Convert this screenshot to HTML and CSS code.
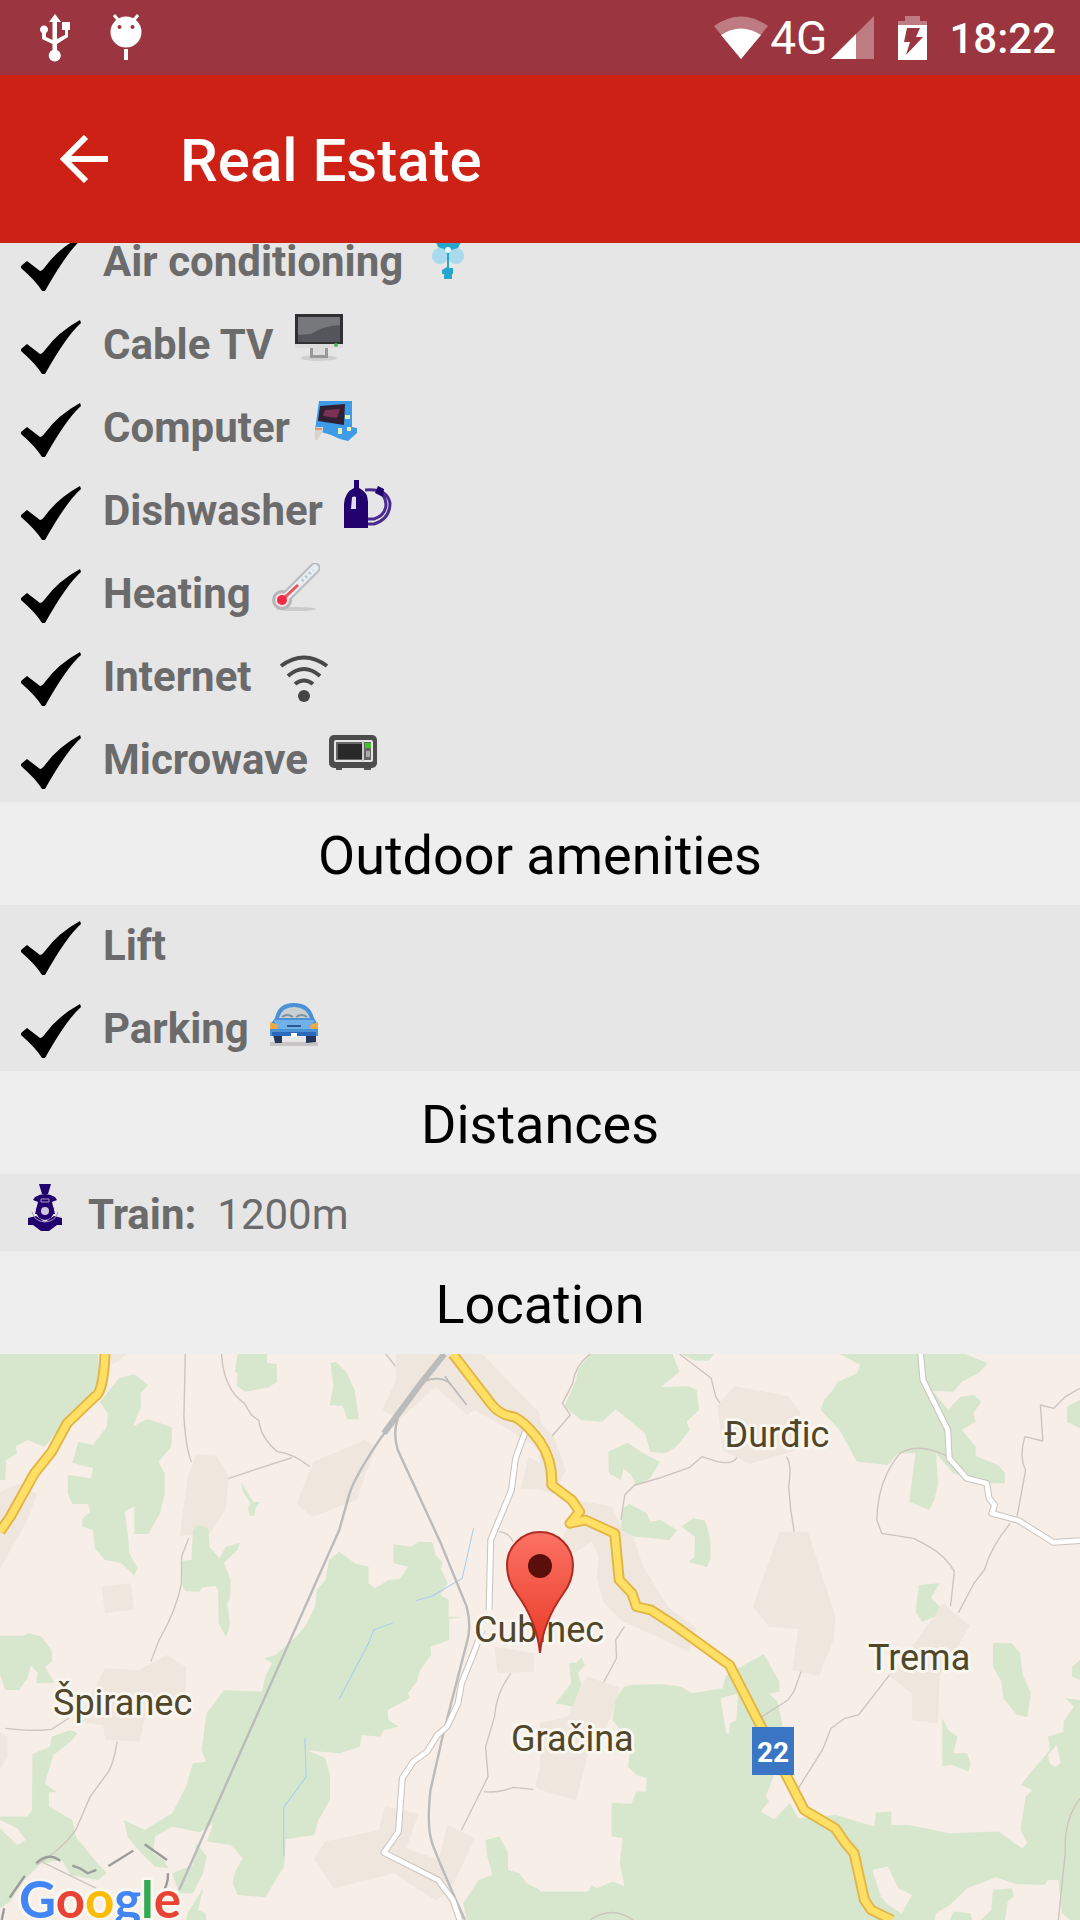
FILE: index.html
```html
<!DOCTYPE html>
<html lang="en">
<head>
  <meta charset="UTF-8">
  <meta name="viewport" content="width=device-width, initial-scale=1.0">
  <title>Real Estate</title>
  <link rel="stylesheet" href="styles.css">
</head>
<body>
  <svg class="sprite" aria-hidden="true">
    <symbol id="check" viewBox="0 0 60 54">
      <path d="M0 29L6 24L19 34Q21 34 24 30Q37 12 59 0L60 3Q46 15 24 54H21Q15 44 0 31Z"/>
    </symbol>
  </svg>

  <header>
    <div class="status-bar">
      <svg width="31" height="48" viewBox="0 0 31 48" fill="#fff">
        <path d="M12.500 36V8H9L15 0L21 8H17V25L25 21V16H22V8H30V16H28V23L17 30V36A6 6 0 1 1 12.500 36V30L2 25V19A4 4 0 1 1 6 19V23L12.500 26Z"/>
      </svg>
      <svg class="bug" width="32" height="48" viewBox="0 0 32 48">
        <path d="M4 1L9 7M28 1L23 7" stroke="#fff" stroke-width="3"/>
        <circle cx="16" cy="18" r="15.500" fill="#fff"/>
        <circle cx="9.500" cy="13" r="2" fill="#9b3640"/>
        <circle cx="22.500" cy="13" r="2" fill="#9b3640"/>
        <path d="M14 35H18V46H14Z" fill="#fff"/>
      </svg>
      <span class="spacer"></span>
      <svg width="54" height="44" viewBox="0 0 54 44">
        <path d="M0 10Q27 -9 54 10L27 43Z" fill="#fff" opacity=".35"/>
        <path d="M7 19Q27 6 47 19L27 43Z" fill="#fff"/>
      </svg>
      <span class="network">4G</span>
      <svg width="43" height="43" viewBox="0 0 43 43">
        <path d="M0 43L43 0V43Z" fill="#fff" opacity=".35"/>
        <path d="M0 43L25 18V43Z" fill="#fff"/>
      </svg>
      <svg class="battery" width="29" height="44" viewBox="0 0 29 44">
        <path d="M0 8V5H7V0H22V5H29V9H0Z" fill="#fff" opacity=".35"/>
        <path d="M0 9H29V44H0Z" fill="#fff"/>
        <path d="M9 12H22L18 21H25L8 39L12 26H6Z" fill="#9b3640"/>
      </svg>
      <span class="clock">18:22</span>
    </div>
    <div class="toolbar">
      <button class="back" aria-label="Back">
        <svg width="48" height="48" viewBox="0 0 48 48" fill="none" stroke="#fff" stroke-width="6">
          <path d="M48 24H5M26 2L4 24L26 46"/>
        </svg>
      </button>
      <h1>Real Estate</h1>
    </div>
  </header>

  <main>
    <ul class="amenities indoor">
      <li>
        <svg class="check"><use href="#check"/></svg>
        <span class="name">Air conditioning</span>
        <svg class="icon" viewBox="0 0 48 48">
          <g fill="#a9daed">
            <circle cx="16" cy="25" r="8"/><circle cx="32" cy="25" r="8"/>
            <path d="M9 8H40L28 25H21Z"/>
          </g>
          <path d="M11 8H38L34 17L27 19L25 23V37H29V43H28V48H20V43H18V39L23 36V23L20 18L14 16Z" fill="#27a5cb"/>
          <circle cx="24" cy="19" r="3" fill="#e5fbff"/>
        </svg>
      </li>
      <li>
        <svg class="check"><use href="#check"/></svg>
        <span class="name">Cable TV</span>
        <svg class="icon" viewBox="0 0 48 48">
          <ellipse cx="24" cy="44" rx="18" ry="3" fill="#cfcfcf"/>
          <path d="M15 34H33V44H15Z" fill="#999"/>
          <path d="M18 34H30V41H18Z" fill="#ddd"/>
          <path d="M0 28H48V34H0Z" fill="#ddd"/>
          <path d="M0 0H48V30H0Z" fill="#303033"/>
          <path d="M3 3H45V28H3Z" fill="#55565c"/>
          <path d="M3 3H45V11Q27 12 16 20L3 21Z" fill="#77787c"/>
          <circle cx="41" cy="31" r="2" fill="#4bb35b"/>
        </svg>
      </li>
      <li>
        <svg class="check"><use href="#check"/></svg>
        <span class="name">Computer</span>
        <svg class="icon" viewBox="0 0 48 48">
          <path d="M8 4H41V30L46 31V36L37 44L29 42L20 38L4 33Z" fill="#3d9be8"/>
          <path d="M9 9L34 7L33 28L7 24Z" fill="#302033"/>
          <path d="M14 13L29 12L26 21L12 19Z" fill="#7c3156"/>
          <path d="M34 18H39V22H34ZM27 31H31V37H27ZM36 30H40V34H36Z" fill="#e9efad"/>
          <path d="M5 30H12V34L6 43H4V34Z" fill="#d8d2cc"/>
          <path d="M4 31H11V33H4Z" fill="#d99b78"/>
        </svg>
      </li>
      <li>
        <svg class="check"><use href="#check"/></svg>
        <span class="name">Dishwasher</span>
        <svg class="icon" viewBox="0 0 48 48">
          <path d="M10 0H15V8Q24 12 24 22V48H0V24Q1 12 10 8Z" fill="#22006e"/>
          <path d="M8 17Q11 16 12 17V29H7Z" fill="#e1dded"/>
          <path d="M21 10Q43 8 46 23Q46 39 30 44H24M24 39H30Q42 35 42 24Q41 14 34 12" fill="none" stroke="#4a2c91" stroke-width="3"/>
          <path d="M34 6L40 9L39 17L31 13Z" fill="#22006e"/>
        </svg>
      </li>
      <li>
        <svg class="check"><use href="#check"/></svg>
        <span class="name">Heating</span>
        <svg class="icon" viewBox="0 0 48 48">
          <ellipse cx="24" cy="46" rx="20" ry="2" fill="#cbcbcb"/>
          <path d="M10 38L43 5" stroke="#b5bcc2" stroke-width="11" stroke-linecap="round"/>
          <circle cx="10" cy="37" r="10" fill="#b5b5b9"/>
          <path d="M12 36L43 5" stroke="#e9edf0" stroke-width="7" stroke-linecap="round"/>
          <circle cx="10" cy="37" r="7" fill="#efdfe3"/>
          <path d="M10 37L26 22" stroke="#e65461" stroke-width="3"/>
          <path d="M30 18L41 7" stroke="#aac6d5" stroke-width="3" stroke-dasharray="2 3"/>
          <circle cx="10" cy="37" r="5" fill="#f22b45"/>
        </svg>
      </li>
      <li>
        <svg class="check"><use href="#check"/></svg>
        <span class="name">Internet</span>
        <svg class="icon large" viewBox="0 0 64 64">
          <g fill="none" stroke="#494949" stroke-width="4">
            <path d="M9 20Q32 3 55 20"/>
            <path d="M16 30Q32 16 48 30"/>
            <path d="M23 38Q32 31 41 38"/>
          </g>
          <circle cx="32" cy="50" r="6" fill="#444"/>
        </svg>
      </li>
      <li>
        <svg class="check"><use href="#check"/></svg>
        <span class="name">Microwave</span>
        <svg class="icon" viewBox="0 0 48 48">
          <path d="M7 36H13V41H7ZM35 36H42V41H35Z" fill="#555"/>
          <rect y="6" width="48" height="33" rx="5" fill="#4c4c4c"/>
          <rect x="6" y="12" width="37" height="20" rx="1" fill="#666" stroke="#e5e5e5" stroke-width="2"/>
          <path d="M9 15H33V30H9Z" fill="#292929"/>
          <path d="M34 12V32" stroke="#ccc" stroke-width="2"/>
          <path d="M36 14H42V19H36Z" fill="#42c12b"/>
          <path d="M37 22H41V28H37Z" fill="#aaa"/>
        </svg>
      </li>
    </ul>

    <h2>Outdoor amenities</h2>
    <ul class="amenities">
      <li>
        <svg class="check"><use href="#check"/></svg>
        <span class="name">Lift</span>
      </li>
      <li>
        <svg class="check"><use href="#check"/></svg>
        <span class="name">Parking</span>
        <svg class="icon" viewBox="0 0 48 48">
          <path d="M0 44H48V48H0Z" fill="#c7c5c5"/>
          <path d="M3 36H12V45H5ZM36 36H46V44L36 45Z" fill="#24365a"/>
          <path d="M5 20Q8 5 24 5Q40 5 44 20L48 27V38H0V27Z" fill="#4b91d3"/>
          <path d="M9 20Q12 9 24 9Q36 9 40 20Z" fill="#c8d0d2"/>
          <path d="M12 19Q17 15 23 19M26 19Q32 15 37 19" fill="none" stroke="#7f929d" stroke-width="2"/>
          <path d="M4 22H44L42 31H6Z" fill="#70b1e9"/>
          <path d="M17 27H31V29H17Z" fill="#2d5796"/>
          <path d="M0 24L8 27L7 31H0ZM48 24L40 27L41 31H48Z" fill="#f2a944"/>
          <path d="M2 34H46V38H2Z" fill="#2a69bb"/>
          <path d="M21 35H27V39H21Z" fill="#fff"/>
        </svg>
      </li>
    </ul>

    <h2>Distances</h2>
    <div class="distance">
      <svg class="icon" viewBox="0 0 48 48" fill="#22006e">
        <path d="M18 0H30L27 10H21Z"/>
        <path d="M14 13Q24 7 34 13L36 16L31 18L34 30H14L17 18L12 16Z"/>
        <path d="M7 34L15 32L24 38L33 32L41 34V41H36L28 47H20L12 41H7Z"/>
        <circle cx="24" cy="27" r="9"/>
        <circle cx="24" cy="27" r="4" fill="#cfc8df"/>
        <path d="M20 15H28V18H20ZM11 28Q13 37 24 38Q35 37 37 28" fill="none" stroke="#a99bc5" stroke-width="1"/>
      </svg>
      <span class="name">Train:</span>
      <span class="value">1200m</span>
    </div>

    <h2>Location</h2>
    <svg class="map" viewBox="0 0 1080 566" role="img" aria-label="Map of Cubinec">
      <defs>
        <linearGradient id="pin" x1="0" y1="0" x2="0" y2="1">
          <stop offset="0" stop-color="#fb7264"/>
          <stop offset="1" stop-color="#e93a25"/>
        </linearGradient>
      </defs>

      <g transform="scale(.3444 .3333) translate(0 -12)">
        <!-- built-up areas -->
        <g class="town">
          <path d="M320 12H370L325 45ZM0 425L55 400L107 432L80 510L0 655ZM570 312L628 318L664 380L655 480L610 550L522 558L545 380ZM295 710L380 700L390 778L305 790ZM910 335L1060 270L1090 290L1035 450L905 502L862 460ZM1150 12H1400L1568 190V300L1480 240L1380 180L1355 195L1265 110L1160 210L1110 180L1150 90ZM1535 320L1568 340V420L1512 415Z"/>
          <path transform="translate(1568 0)" d="M0 215L40 260L75 360L40 430L0 420ZM110 450L210 470L235 530L265 545L300 650L375 775L455 835L430 905L330 855L240 815L185 760L165 680L170 620L150 575L100 610L60 580ZM565 108L720 138L755 185L745 300L610 342L530 300L515 165ZM695 545H778L858 800L852 870L810 978L732 960L750 838L665 830L618 770ZM1170 760L1248 828L1160 980L1155 1120L1080 1110V1030L1010 975L1095 870Z"/>
          <path transform="translate(0 840)" d="M305 115L405 120L485 75L540 110V190L420 270L405 335L305 330L300 285L220 275ZM0 305L22 320V380L0 420ZM1435 50L1550 70V125L1445 130ZM1118 528L1215 552L1180 655L1275 690L1298 585L1378 625L1310 780L1265 812L1145 730L968 775L912 685L945 635L1100 600ZM1568 410L1555 470L1568 480Z"/>
          <path transform="translate(1568 840)" d="M135 140L230 172L205 265L140 370L105 510L0 480V280L80 260Z"/>
        </g>

        <!-- woods -->
        <g class="wood">
          <path d="M0 12H285L288 90L250 160L185 220L130 290L80 270L45 290L50 310L18 330L15 390H0ZM330 105L345 85L390 73L430 105L408 130L410 170L385 230L428 207L500 232L497 290L460 335L478 370V430L465 490L430 552H390V468L362 485L372 560L375 610L400 655L390 675L350 638L305 630L275 595L270 540L238 530L240 505L262 485L255 462H210L197 430V375L265 385L270 355L210 338L228 275L270 285L310 230L313 190L290 155ZM690 12H775V38L804 42V95L780 112L712 125L688 108L690 70L682 65ZM960 40L975 35L1005 65L1030 120L1042 208H1008L995 168L957 165L968 110ZM700 395L735 455L755 457L742 475L738 497H725L720 475L727 460L705 425ZM560 540L575 524L605 535L608 590L638 625L655 590L697 578L690 600L650 638L670 690L668 745L660 760L668 825L656 862L635 820L633 720L625 708L590 712L578 725L540 724L530 710L528 632L556 630ZM0 857H65L85 850L120 860L150 900L152 935L130 950L158 998L105 1000L110 970L90 945L80 985L55 1020H15L0 975ZM1142 583L1195 590L1215 575L1255 577L1265 615L1285 638L1280 655L1300 700L1278 735L1303 750L1302 800L1340 802L1304 807V870L1250 890L1252 915L1220 960L1210 995L1185 1030L1190 1045L1125 1080L1128 1110L1158 1130L1115 1140L1105 1160L1050 1155L1045 1190L985 1210L935 1205L890 1200L945 1225L958 1275V1350L925 1410L912 1455L830 1468L825 1550L770 1642L690 1635L675 1600L685 1560L705 1525L670 1485L600 1475L620 1420L580 1448L500 1430L450 1460L445 1510L475 1530L490 1555L450 1550L410 1510L370 1460L360 1410L420 1440L500 1390L540 1310L560 1240L598 1235L585 1200L600 1090L650 1020L760 1025L770 980L790 940L765 925L800 915L860 860L885 830L915 770L920 720L945 690L955 630L985 605L1030 640L1070 650L1070 700L1088 715L1130 690L1160 688L1185 650L1142 640Z"/>
          <path transform="translate(1568 0)" d="M145 12H385L405 65L350 112L430 108L455 120L462 180L425 215L435 240L395 290L365 310L320 305L305 250L220 178L180 215L120 210L70 170L105 90L110 60ZM410 12H505L490 32H450ZM870 12H1235L1300 40L1275 68L1225 95L1200 125L1140 122L1185 180L1220 140L1260 135L1282 155L1258 190L1265 215L1225 240L1265 290V318L1330 345L1350 370V400H1290L1200 370L1150 310L1156 400L1145 450L1130 480L1072 455L1090 310L1040 310L1010 345L920 335L870 240L815 180L825 150L850 120L865 95L920 70L930 45ZM198 305L255 278L300 310L348 335L320 385L280 405L265 375L242 355L235 390L200 370ZM240 475L260 462L310 490L320 515L350 510L398 540L375 570L330 565L275 560L235 540ZM410 530L445 505L480 512L495 570V625L485 652L432 635L448 620L450 560ZM1100 705L1160 700L1135 745L1162 770L1145 800L1110 815L1090 785ZM1530 170L1568 150V235L1530 215Z"/>
          <path transform="translate(0 840)" d="M150 320L205 300L225 310L205 335L155 375L130 460L165 487H142V530L210 570L220 620L275 690L310 730L285 750L205 735L180 690L120 700L70 750L30 815L0 835V560L80 560L93 540L94 372L145 350ZM500 730L560 705L570 640L600 680L590 730L560 790L520 790ZM545 850L590 775L575 840L598 850V870H540ZM1410 630L1450 620L1465 650L1475 670V720L1508 730L1530 760L1568 780V870H1355L1345 820L1390 750L1430 735L1415 680Z"/>
          <path transform="translate(1568 840)" d="M245 170L265 165L350 162L410 170L440 190L530 175L540 135L650 72L695 155V185L665 190L690 215L705 290L680 435L655 500L665 515L640 545L680 568L725 520L750 565L860 555L970 590L975 548L1020 545V585L1070 585L1190 610L1330 605L1400 655L1415 640L1395 600L1410 500L1430 480L1395 465L1480 360L1475 320L1520 305V275L1550 230L1525 205L1568 210V870H1540L1515 850L1505 750L1475 750L1465 765L1380 762L1325 742L1240 775L1190 825L1150 850L1145 870H0V785L140 785L150 765L165 775L210 755L245 768L232 700L240 625L208 620V518L265 522L280 485H308L310 445L280 435L255 410L265 340L210 270L220 205ZM85 100L105 98L120 82L130 105L110 130L120 165L95 230L45 220L90 160ZM1315 38L1370 40L1395 70L1400 130L1425 190L1415 262L1385 255L1345 205L1340 155L1315 110ZM1168 265L1185 300L1212 320L1200 370L1240 370L1250 400L1245 425L1195 405L1168 408ZM1568 90L1545 110V140L1568 150ZM1190 870L1200 845L1250 850L1255 870ZM1315 780L1370 775L1375 800L1358 815L1350 870H1280L1310 840Z"/>
          <path class="clearing" d="M0 1410L50 1435L75 1470L50 1485L0 1435Z"/>
          <path class="clearing" transform="translate(1568 840)" d="M525 205L575 190L570 270L552 280L548 312L540 308ZM965 720L1010 710L1040 775L1080 795L1050 850L1010 825L990 800ZM1475 375L1500 345L1512 400L1495 412L1480 400Z"/>
        </g>

        <!-- water and paths -->
        <path class="water" d="M1375 535L1342 685L1255 738L1208 752M1142 818L1085 840L1070 880L985 1048M885 1165L889 1280L824 1372V1520"/>
        <g class="path">
          <path d="M538 12L534 200Q540 300 556 335M643 12Q650 120 710 160L730 195L752 212Q755 260 805 305Q850 310 900 350M664 385L848 323M548 565L527 620V700Q512 780 462 870L438 935M1120 12L1148 48M1450 545Q1480 550 1490 575M15 1135Q100 1145 150 1138L200 1105M340 1175Q330 1240 315 1265L262 1340L220 1440Q180 1500 105 1545M120 1535L280 1615M1483 970Q1440 1030 1436 1100L1410 1190L1417 1280L1340 1440M1405 1325Q1450 1330 1490 1312L1548 1318"/>
          <path transform="translate(1568 0)" d="M145 12Q100 50 95 100L65 160L88 195L35 258M405 12L497 85L510 140L522 158M572 322Q560 345 515 335L470 320L435 352L348 384L275 405L246 435L235 510M715 320Q732 340 722 410L728 480L738 545M1185 320Q1100 275 1045 310Q980 390 978 510L992 550L1085 565L1130 590Q1180 620 1203 665L1192 768M1568 115L1525 140L1492 175L1453 165L1460 273L1408 260Q1390 320 1410 360L1385 500M1365 520Q1310 590 1290 660L1260 700L1215 788M245 830L220 870L222 925L185 997M758 965L737 1025L720 1050L640 1103M1015 975L925 1095L885 1105L845 1135L820 1200L750 1315M1568 1345Q1520 1410 1525 1510L1505 1710M145 1710Q210 1665 270 1710"/>
        </g>

        <!-- railways -->
        <path class="rail" d="M1290 12L1105 265Q1030 380 1015 430L985 540L855 842L520 1620M1155 205Q1140 250 1155 300L1280 580L1355 770Q1370 830 1355 880L1285 1160L1250 1320Q1238 1430 1255 1480Q1280 1550 1350 1710"/>
        <path class="rail siding" d="M1230 95Q1270 75 1305 98L1355 165M1292 78L1308 105"/>
        <path class="rail station" d="M1290 12L1222 100L1115 250"/>
        <path class="border" d="M5 1710L12 1675M28 1643L72 1578M105 1540Q140 1505 175 1533M210 1547L232 1555L255 1570L280 1560M315 1548L387 1502M420 1483L485 1530M487 1570Q490 1590 478 1618"/>

        <!-- roads -->
        <g class="road-edge">
          <path id="local" d="M1525 245L1497 325L1485 420L1425 570L1420 780M1400 840L1375 910L1340 1000L1330 1060L1298 1130L1270 1155L1240 1205L1200 1235L1168 1285L1157 1445L1115 1508L1272 1590L1315 1650L1335 1710M2673 10L2680 90L2752 240L2756 325L2807 385L2865 400L2872 445L2888 465L2880 490L2958 512L3058 577L3136 572"/>
        </g>
        <use href="#local" class="road"/>
        <g class="main-edge">
          <path id="main" d="M305 12Q300 130 275 140L195 220L150 305L100 370L30 500L0 545M1315 12L1425 160Q1450 195 1490 200Q1520 210 1568 275Q1605 330 1602 405L1660 450L1683 485L1655 520L1700 510L1785 550L1798 690L1835 730L1848 770L1890 780L1950 820L2118 945L2200 1110L2335 1380L2425 1435L2455 1480L2480 1510L2510 1650L2530 1680L2590 1710"/>
        </g>
        <use href="#main" class="main-road"/>
      </g>

      <rect x="752" y="373" width="42" height="48" fill="#3b76c4"/>
      <text class="road-number" x="773" y="408">22</text>
      <g class="place">
        <text x="724" y="93">Đurđic</text>
        <text x="474" y="288">Cubinec</text>
        <text x="868" y="316">Trema</text>
        <text x="53" y="361">Špiranec</text>
        <text x="511" y="397">Gračina</text>
      </g>
      <path d="M540 299Q537 268 517 240Q507 227 507 211A33 33 0 0 1 573 211Q573 227 563 240Q543 268 540 299Z" fill="url(#pin)" stroke="#ae2c23" stroke-width="2"/>
      <circle cx="540" cy="212" r="12" fill="#5a0f0c"/>
      <text class="google" x="19" y="564"><tspan fill="#4285f4">G</tspan><tspan fill="#ea4335">o</tspan><tspan fill="#fbbc05">o</tspan><tspan fill="#4285f4">g</tspan><tspan fill="#34a853">l</tspan><tspan fill="#ea4335">e</tspan></text>
    </svg>
  </main>
</body>
</html>
```
FILE: styles.css
```css
* {
  box-sizing: border-box;
}

body {
  margin: 0;
  background-color: #eee;
  color: #6b6b6b;
  font-family: Roboto, sans-serif;
  font-size: 42px;
  line-height: 50px;
}

.sprite {
  position: absolute;
  width: 0;
  height: 0;
}

svg {
  flex: none;
}

/* status bar and toolbar */
header {
  position: sticky;
  top: 0;
  z-index: 1;
  color: #fff;
}

.status-bar {
  display: flex;
  align-items: center;
  height: 75px;
  padding: 0 24px 0 40px;
  background-color: #9b3640;
}

.bug {
  margin-left: 39px;
}

.spacer {
  flex: 1;
}

.network {
  margin: 0 4px 0 2px;
  font-size: 46px;
}

.battery {
  margin: 0 22px 0 24px;
}

.clock {
  padding-top: 3px;
  font-weight: 500;
}

.toolbar {
  display: flex;
  align-items: center;
  height: 168px;
  padding-left: 60px;
  background-color: #cc2114;
}

.back {
  display: flex;
  width: 48px;
  height: 48px;
  margin-right: 72px;
  padding: 0;
  border: 0;
  background: none;
}

h1 {
  margin: 0;
  padding-top: 4px;
  font-size: 60px;
  font-weight: 500;
}

/* amenities */
.amenities {
  margin: 0;
  padding: 0;
  list-style: none;
  background-color: #e6e6e6;
}

.indoor {
  margin-top: -22px;
}

.amenities li {
  display: flex;
  align-items: flex-start;
  height: 83px;
  padding: 10px 21px 0;
}

.check {
  width: 60px;
  height: 54px;
  margin: 6px 22px 0 0;
}

.name {
  margin-top: 6px;
  font-weight: 700;
}

.icon {
  width: 48px;
  height: 48px;
  margin-left: 21px;
}

.large {
  width: 64px;
  height: 64px;
  margin-left: 20px;
}

h2 {
  margin: 0;
  padding: 22px 0 17px;
  color: #000;
  font-size: 54px;
  font-weight: 400;
  line-height: 64px;
  text-align: center;
}

.distance {
  display: flex;
  align-items: flex-start;
  height: 77px;
  padding: 10px 21px 0;
  background-color: #e6e6e6;
}

.distance .icon {
  margin: 0 19px 0 0;
}

.value {
  margin: 6px 0 0 21px;
}

/* map */
.map {
  display: block;
  width: 100%;
  background-color: #f7eee7;
}

.town {
  fill: #efe7de;
}

.wood {
  fill: #d7e7cd;
}

.clearing {
  fill: #f7eee7;
}

.water,
.path,
.rail,
.border,
.road-edge,
.main-edge,
.road,
.main-road {
  fill: none;
  stroke-linejoin: round;
}

.water {
  stroke: #a9cdee;
  stroke-width: 3;
}

.path {
  stroke: #cdc4bf;
  stroke-width: 4;
}

.rail {
  stroke: #bbb;
  stroke-width: 7;
}

.siding {
  stroke-width: 5;
}

.station {
  stroke-width: 18;
}

.border {
  stroke: #9b9b9b;
  stroke-width: 7;
}

.road-edge {
  stroke: #c9c3be;
  stroke-width: 20;
}

.road-edge path,
.main-edge path {
  stroke: inherit;
}

.road {
  stroke: #fff;
}

.main-edge {
  stroke: #e2b544;
  stroke-width: 32;
}

.road {
  stroke-width: 14;
}

.main-road {
  stroke: #ffdf64;
  stroke-width: 21;
}

.place {
  fill: #50462a;
  stroke: #f9f5ef;
  stroke-width: 6px;
  stroke-linejoin: round;
  paint-order: stroke;
  font-size: 36px;
}

.road-number {
  fill: #fff;
  font-size: 28px;
  font-weight: 700;
  text-anchor: middle;
}

.google {
  stroke: #f9f5ef;
  stroke-width: 6px;
  stroke-linejoin: round;
  paint-order: stroke;
  font-family: Lato, sans-serif;
  font-size: 51px;
  font-weight: 700;
}
```
